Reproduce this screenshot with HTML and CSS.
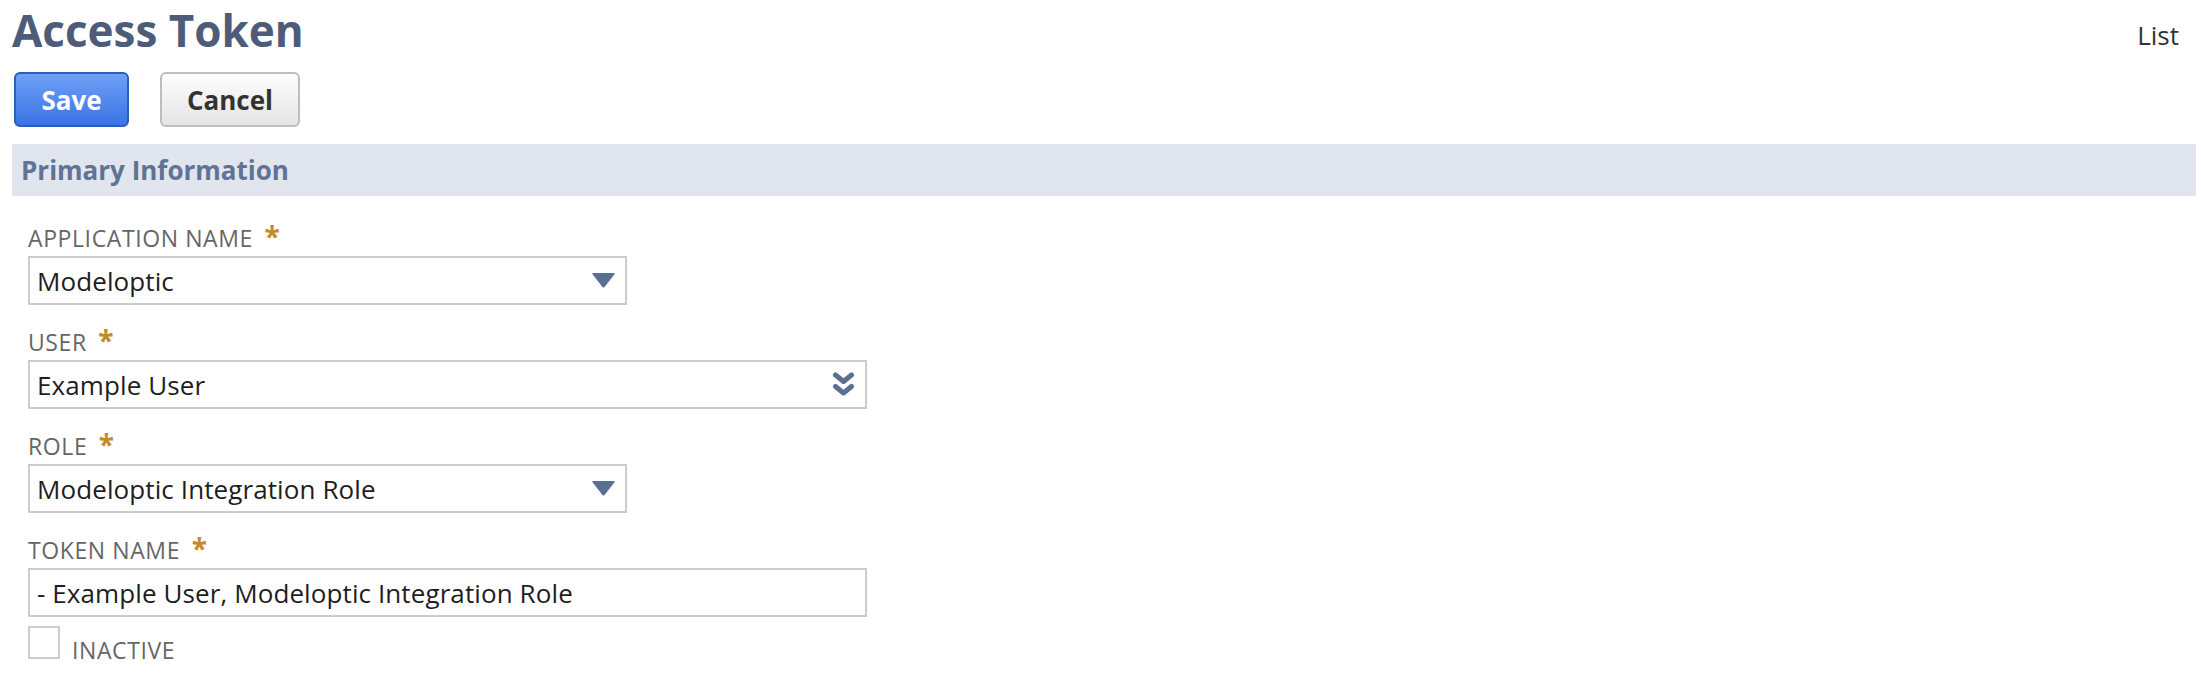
FILE: index.html
```html
<!DOCTYPE html>
<html>
<head>
<meta charset="utf-8">
<link rel="stylesheet" href="styles.css">
</head>
<body>
<div class="page">
  <header class="header">
    <h1 class="title">Access Token</h1>
    <a class="list-link">List</a>
  </header>
  <div class="buttons">
    <button class="btn btn-save">Save</button>
    <button class="btn btn-cancel">Cancel</button>
  </div>
  <div class="section-bar">Primary Information</div>
  <div class="form">
    <div class="field">
      <div class="label">APPLICATION NAME <span class="req">*</span></div>
      <div class="box box-short">
        <span class="value">Modeloptic</span>
        <svg class="tri" width="23" height="15" viewBox="0 0 23 15"><path d="M1 0 H22 Q23.5 0 22.5 1.2 L13 13.5 Q11.5 15.3 10 13.5 L0.5 1.2 Q-0.5 0 1 0 Z" fill="#5b6f92"/></svg>
      </div>
    </div>
    <div class="field">
      <div class="label">USER <span class="req">*</span></div>
      <div class="box box-long">
        <span class="value">Example User</span>
        <svg class="dbl" width="23" height="25" viewBox="0 0 23 25"><path d="M3.5 3 L11.5 9.5 L19.5 3 M3.5 14.5 L11.5 21 L19.5 14.5" fill="none" stroke="#5b6f92" stroke-width="5" stroke-linecap="round" stroke-linejoin="round"/></svg>
      </div>
    </div>
    <div class="field">
      <div class="label">ROLE <span class="req">*</span></div>
      <div class="box box-short">
        <span class="value">Modeloptic Integration Role</span>
        <svg class="tri" width="23" height="15" viewBox="0 0 23 15"><path d="M1 0 H22 Q23.5 0 22.5 1.2 L13 13.5 Q11.5 15.3 10 13.5 L0.5 1.2 Q-0.5 0 1 0 Z" fill="#5b6f92"/></svg>
      </div>
    </div>
    <div class="field">
      <div class="label">TOKEN NAME <span class="req">*</span></div>
      <div class="box box-long">
        <span class="value">- Example User, Modeloptic Integration Role</span>
      </div>
    </div>
    <div class="check-row">
      <span class="checkbox"></span>
      <span class="check-label">INACTIVE</span>
    </div>
  </div>
</div>
</body>
</html>
```

FILE: styles.css
```css
html, body {
  margin: 0;
  padding: 0;
  background: #ffffff;
}
body {
  font-family: "Open Sans", "Liberation Sans", sans-serif;
  color: #222;
}
.page {
  padding: 0 8px 0 0;
}
.header {
  display: flex;
  justify-content: space-between;
  align-items: flex-start;
}
.title {
  margin: 0 0 0 12px;
  font-size: 44px;
  font-weight: 700;
  line-height: 60px;
  color: #4d5c78;
}
.list-link {
  margin-top: 18px;
  margin-right: 17px;
  font-size: 26px;
  line-height: 35px;
  color: #333;
}
.buttons {
  display: flex;
  gap: 31px;
  margin: 12px 0 0 14px;
}
.btn {
  height: 55px;
  padding: 0 24px;
  border-radius: 6px;
  font-family: "Open Sans", "Liberation Sans", sans-serif;
  font-size: 26px;
  font-weight: 700;
  line-height: 1;
}
.btn-save {
  width: 115px;
  border: 2px solid #2c5db8;
  background: linear-gradient(#6fa0f6, #3a74e5);
  color: #ffffff;
}
.btn-cancel {
  width: 140px;
  border: 2px solid #bdbdbd;
  background: linear-gradient(#fdfdfd, #e5e5e5);
  color: #333;
}
.section-bar {
  margin: 17px 0 0 12px;
  height: 52px;
  padding-left: 9px;
  display: flex;
  align-items: center;
  background: #e0e5ee;
  font-size: 26px;
  font-weight: 700;
  color: #5f7394;
}
.form {
  margin: 27px 0 0 28px;
  display: flex;
  flex-direction: column;
  gap: 22px;
}
.field {
  display: flex;
  flex-direction: column;
  gap: 3px;
}
.label {
  font-size: 23px;
  line-height: 30px;
  letter-spacing: 0.6px;
  color: #666;
}
.req {
  margin-left: 5px;
  color: #c4892c;
  font-weight: 700;
  font-size: 28px;
  line-height: 20px;
}
.box {
  box-sizing: border-box;
  height: 49px;
  border: 2px solid #cccccc;
  display: flex;
  align-items: center;
  justify-content: space-between;
  padding: 0 10px 0 7px;
}
.box-short { width: 599px; }
.box-long { width: 839px; }
.value {
  font-size: 26px;
  letter-spacing: 0.1px;
  color: #1e1e1e;
  white-space: pre;
}
.tri { flex: none; }
.dbl { flex: none; }
.check-row {
  margin-top: -13px;
  display: flex;
  align-items: baseline;
  gap: 12px;
}
.checkbox {
  display: inline-block;
  box-sizing: border-box;
  width: 32px;
  height: 33px;
  border: 2px solid #cccccc;
}
.check-label {
  font-size: 23px;
  letter-spacing: 0.6px;
  color: #666;
}
```
